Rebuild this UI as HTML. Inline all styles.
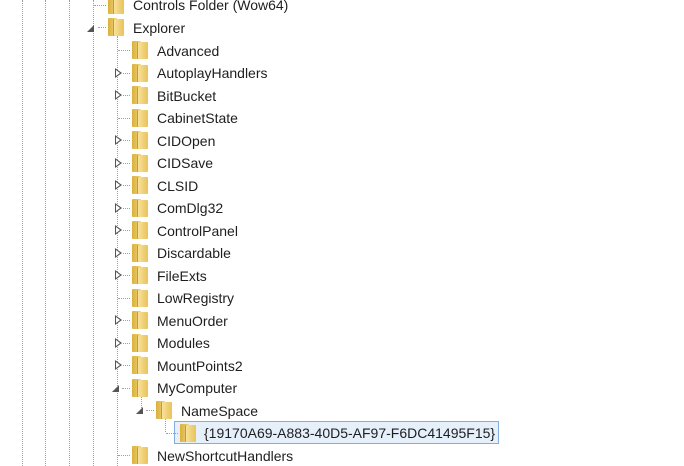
<!DOCTYPE html>
<html><head><style>
body{margin:0;width:684px;height:466px;background:#fff;overflow:hidden;position:relative;font-family:"Liberation Sans",sans-serif;font-size:14px;color:#1e1e1e}
.v{position:absolute;width:0;border-left:1px dotted #a0a0a0}
.h{position:absolute;height:0;border-top:1px dotted #a0a0a0}
.r{position:absolute;height:20px;line-height:20px;white-space:nowrap}
.f{position:absolute;width:16px;height:18px}
.f:before{content:"";position:absolute;left:0;top:0;width:9px;height:18px;background:linear-gradient(90deg,#d9b13c,#f2d37a);border-radius:1px}
.f:after{content:"";position:absolute;left:6px;top:1px;width:10px;height:17px;background:linear-gradient(90deg,#f8e29a,#e9c25a);border-radius:1px;box-shadow:-1px 0 0 #c99b2a}
.oa{position:absolute;width:0;height:0;border-top:5px solid transparent;border-bottom:5px solid transparent;border-left:7px solid #555}
.oa:after{content:"";position:absolute;left:-6px;top:-3px;border-top:3px solid transparent;border-bottom:3px solid transparent;border-left:4px solid #fff}
.ea{position:absolute;width:0;height:0;border-left:7px solid transparent;border-bottom:7px solid #555}
.sel{position:absolute;left:174px;top:421px;width:323px;height:21px;background:#e5f0fb;border:1px solid #84acdd}
</style></head><body>
<div class="v" style="left:22px;top:0;height:466px"></div>
<div class="v" style="left:45px;top:0;height:466px"></div>
<div class="v" style="left:69px;top:0;height:466px"></div>
<div class="v" style="left:93px;top:0;height:466px"></div>
<div class="v" style="left:117px;top:36px;height:430px"></div>
<div class="v" style="left:141px;top:396px;height:14px"></div>
<div class="v" style="left:165px;top:418px;height:14px"></div>
<div class="sel"></div>
<div class="h" style="left:94px;top:5px;width:12px"></div><div class="f" style="left:108px;top:-4px"></div><div class="r" style="left:133px;top:-5px">Controls Folder (Wow64)</div>
<div class="ea" style="left:87px;top:25px"></div><div class="h" style="left:98px;top:27px;width:8px"></div><div class="f" style="left:108px;top:18px"></div><div class="r" style="left:133px;top:18px">Explorer</div>

<div class="h" style="left:118px;top:50px;width:12px"></div><div class="f" style="left:132px;top:41px"></div><div class="r" style="left:157px;top:41px">Advanced</div>
<div class="oa" style="left:115px;top:68px"></div><div class="h" style="left:123px;top:73px;width:7px"></div><div class="f" style="left:132px;top:64px"></div><div class="r" style="left:157px;top:63px">AutoplayHandlers</div>
<div class="oa" style="left:115px;top:90px"></div><div class="h" style="left:123px;top:95px;width:7px"></div><div class="f" style="left:132px;top:86px"></div><div class="r" style="left:157px;top:86px">BitBucket</div>
<div class="h" style="left:118px;top:118px;width:12px"></div><div class="f" style="left:132px;top:109px"></div><div class="r" style="left:157px;top:108px">CabinetState</div>
<div class="oa" style="left:115px;top:135px"></div><div class="h" style="left:123px;top:140px;width:7px"></div><div class="f" style="left:132px;top:131px"></div><div class="r" style="left:157px;top:131px">CIDOpen</div>
<div class="oa" style="left:115px;top:158px"></div><div class="h" style="left:123px;top:163px;width:7px"></div><div class="f" style="left:132px;top:154px"></div><div class="r" style="left:157px;top:153px">CIDSave</div>
<div class="oa" style="left:115px;top:180px"></div><div class="h" style="left:123px;top:185px;width:7px"></div><div class="f" style="left:132px;top:176px"></div><div class="r" style="left:157px;top:176px">CLSID</div>
<div class="oa" style="left:115px;top:203px"></div><div class="h" style="left:123px;top:208px;width:7px"></div><div class="f" style="left:132px;top:199px"></div><div class="r" style="left:157px;top:198px">ComDlg32</div>
<div class="oa" style="left:115px;top:225px"></div><div class="h" style="left:123px;top:230px;width:7px"></div><div class="f" style="left:132px;top:221px"></div><div class="r" style="left:157px;top:221px">ControlPanel</div>
<div class="oa" style="left:115px;top:248px"></div><div class="h" style="left:123px;top:253px;width:7px"></div><div class="f" style="left:132px;top:244px"></div><div class="r" style="left:157px;top:243px">Discardable</div>
<div class="oa" style="left:115px;top:270px"></div><div class="h" style="left:123px;top:275px;width:7px"></div><div class="f" style="left:132px;top:266px"></div><div class="r" style="left:157px;top:266px">FileExts</div>
<div class="h" style="left:118px;top:298px;width:12px"></div><div class="f" style="left:132px;top:289px"></div><div class="r" style="left:157px;top:288px">LowRegistry</div>
<div class="oa" style="left:115px;top:315px"></div><div class="h" style="left:123px;top:320px;width:7px"></div><div class="f" style="left:132px;top:311px"></div><div class="r" style="left:157px;top:311px">MenuOrder</div>
<div class="oa" style="left:115px;top:338px"></div><div class="h" style="left:123px;top:343px;width:7px"></div><div class="f" style="left:132px;top:334px"></div><div class="r" style="left:157px;top:333px">Modules</div>
<div class="oa" style="left:115px;top:360px"></div><div class="h" style="left:123px;top:365px;width:7px"></div><div class="f" style="left:132px;top:356px"></div><div class="r" style="left:157px;top:356px">MountPoints2</div>
<div class="ea" style="left:112px;top:385px"></div><div class="h" style="left:122px;top:388px;width:8px"></div><div class="f" style="left:132px;top:379px"></div><div class="r" style="left:157px;top:378px">MyComputer</div>
<div class="ea" style="left:136px;top:407px"></div><div class="h" style="left:146px;top:410px;width:8px"></div><div class="f" style="left:156px;top:401px"></div><div class="r" style="left:181px;top:401px">NameSpace</div>
<div class="h" style="left:166px;top:433px;width:12px"></div><div class="f" style="left:180px;top:424px"></div><div class="r" style="left:204px;top:423px">{19170A69-A883-40D5-AF97-F6DC41495F15}</div>
<div class="h" style="left:118px;top:455px;width:12px"></div><div class="f" style="left:132px;top:446px"></div><div class="r" style="left:157px;top:446px">NewShortcutHandlers</div>
</body></html>
